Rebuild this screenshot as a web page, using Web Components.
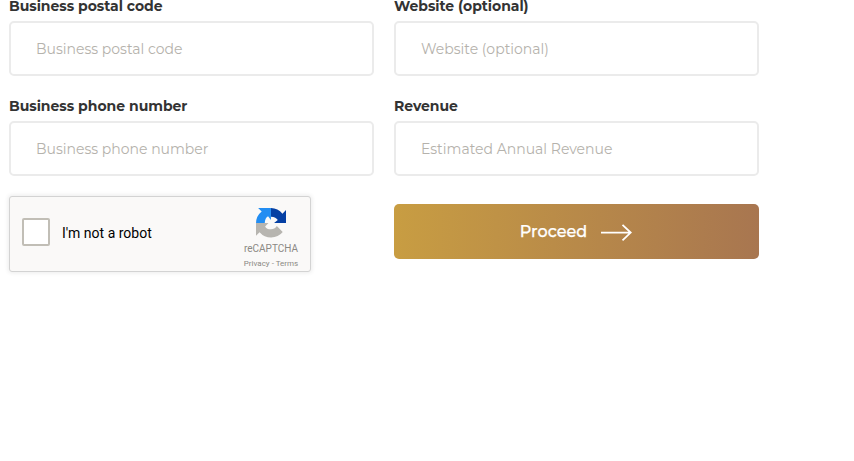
<!DOCTYPE html>
<html lang="en">
<head>
<meta charset="utf-8">
<title>Business details</title>
<style>
html,body{margin:0;height:100%;background:#fff;overflow:hidden}
body{font-family:Montserrat,Inter,"Liberation Sans",sans-serif}
</style>
</head>
<body>
<business-form></business-form>
<script>
class FormField extends HTMLElement{
  connectedCallback(){
    const a=k=>this.getAttribute(k);
    this.attachShadow({mode:'open'}).innerHTML=`<style>
    :host{display:block}
    .label{font-size:14px;font-weight:700;line-height:12px;height:21px;letter-spacing:-.03px;color:#333;white-space:nowrap}
    .box{box-sizing:border-box;height:55px;border:2px solid #ebebeb;border-radius:5px;padding:0 25px;display:flex;align-items:center;background:#fff;color:#b5b2ac;font-size:14px;font-weight:400;line-height:20px}
    </style><div class="label">${a('label')}</div>
    <div class="box">${a('placeholder')}</div>`;
  }
}
class RobotCheck extends HTMLElement{
  connectedCallback(){
    this.attachShadow({mode:'open'}).innerHTML=`<style>
    :host{box-sizing:border-box;display:flex;width:302px;height:76px;margin-top:-4px;border:1px solid #d3d3d3;border-radius:3px;background:#faf9f8;box-shadow:0 0 4px 1px rgba(0,0,0,.08);font-family:Roboto,sans-serif;padding-left:12px}
    .check{box-sizing:border-box;width:28px;height:28px;border:2px solid #c1beb6;border-radius:2px;background:#fff;margin-top:21px}
    .text{margin:28px 0 0 12px;font-size:14px;line-height:17px;color:#000;flex:1}
    .brand{width:58px;margin-right:10px;padding-top:11px;display:flex;flex-direction:column;align-items:center;color:#8b8984;white-space:nowrap}
    svg{display:block;width:30px;height:30px}
    .name{font-size:10px;line-height:12px;margin-top:5px}
    .links{font-size:8px;line-height:10px;margin-top:4px}
    </style><div class="check"></div><div class="text">I'm not a robot</div>
    <div class="brand"><svg viewBox="0 0 64 64">
    <path fill="#0540a4" d="M64 32V4.5l-7.6 7.6A32 32 0 0 0 31.9.1v18.6c8 .2 11.7 2.8 14.6 7L38.5 32z"/>
    <path fill="#228df2" d="M31.9 0H4.5l7.6 7.6A32 32 0 0 0 .1 32h18.6c.2-8 2.8-11.7 7-14.6l6.2 8z"/>
    <path fill="#b7b5b0" d="M0 32v27.4l7.6-7.6A32 32 0 0 0 57 51L44.4 38.5c-3 5-7.4 7-12.5 7-6 0-10.5-2.5-12.5-6.3L26.6 32z"/>
    </svg><div class="name">reCAPTCHA</div><div class="links">Privacy - Terms</div></div>`;
  }
}
class ProceedButton extends HTMLElement{
  connectedCallback(){
    this.attachShadow({mode:'open'}).innerHTML=`<style>
    :host{display:flex;box-sizing:border-box;height:55px;margin-top:4px;border-radius:5px;background:linear-gradient(90deg,#c89d42,#a87650);align-items:center;justify-content:center;gap:14px;color:#fff;font-size:16px;font-weight:500;line-height:20px;-webkit-text-stroke:.25px #fff}
    svg{display:block;width:32px;height:18px;margin-top:2px}
    </style><span>Proceed</span>
    <svg viewBox="0 0 32 18" fill="none" stroke="#fff" stroke-width="1.8"><path d="M0 8.6h30M21.5 .8l8.2 7.8-8.2 7.8"/></svg>`;
  }
}
class BusinessForm extends HTMLElement{
  connectedCallback(){
    this.attachShadow({mode:'open'}).innerHTML=`<style>
    :host{display:grid;grid-template-columns:365px 365px;gap:24px 20px;padding-left:9px}
    </style>
    <form-field label="Business postal code" placeholder="Business postal code"></form-field>
    <form-field label="Website (optional)" placeholder="Website (optional)"></form-field>
    <form-field label="Business phone number" placeholder="Business phone number"></form-field>
    <form-field label="Revenue" placeholder="Estimated Annual Revenue"></form-field>
    <robot-check></robot-check><proceed-button></proceed-button>`;
  }
}
customElements.define('form-field',FormField);
customElements.define('robot-check',RobotCheck);
customElements.define('proceed-button',ProceedButton);
customElements.define('business-form',BusinessForm);
</script>
</body>
</html>
